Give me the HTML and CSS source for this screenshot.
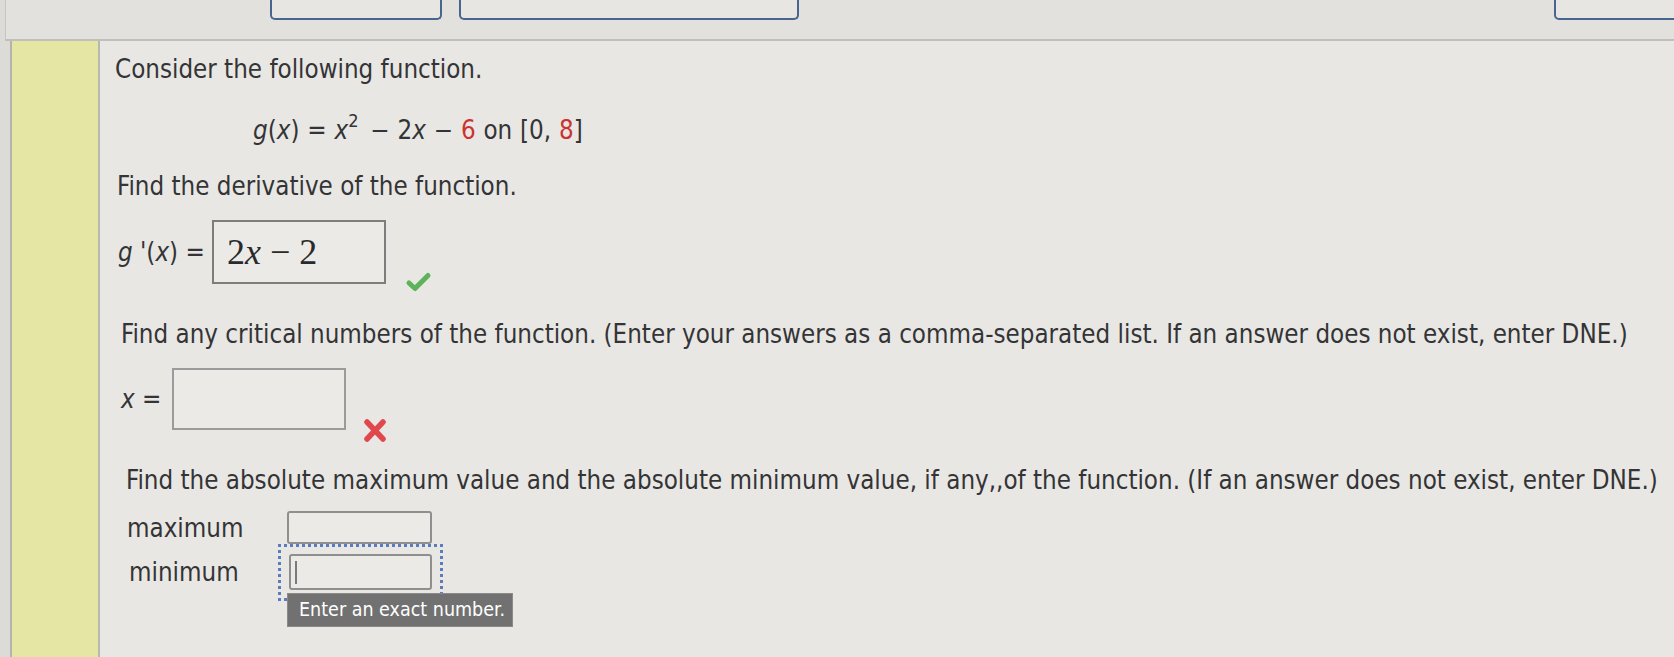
FILE: index.html
```html
<!DOCTYPE html>
<html>
<head>
<title>Question</title>
<link rel="stylesheet" href="styles.css">
</head>
<body>

<div id="topbar">
  <div class="tab tab1"></div>
  <div class="tab tab2"></div>
  <div class="tab tab3"></div>
</div>

<div id="main">
  <div id="marker"></div>

  <div id="question">
    <p class="line">Consider the following function.</p>
    <p class="line formula"><i>g</i>(<i>x</i>) = <i>x</i><sup>2</sup> &minus; 2<i>x</i> &minus; <span class="red">6</span> on [0, <span class="red">8</span>]</p>

    <p class="line deriv-text">Find the derivative of the function.</p>
    <div class="row deriv-row">
      <span class="label"><i>g</i> '(<i>x</i>) =</span>
      <div class="mathbox">2<i>x</i><span class="op">&minus;</span>2</div>
      <svg class="check" width="27" height="22" viewBox="0 0 27 22">
        <path d="M4 12 L10 17.5 L23 4.5" fill="none" stroke="#5cb35a" stroke-width="5" stroke-linecap="round" stroke-linejoin="round"/>
      </svg>
    </div>

    <p class="line crit-text">Find any critical numbers of the function. (Enter your answers as a comma-separated list. If an answer does not exist, enter DNE.)</p>
    <div class="row crit-row">
      <span class="label"><i>x</i> =</span>
      <div class="plainbox"></div>
      <svg class="cross" width="26" height="27" viewBox="0 0 26 27">
        <path d="M5 5 L21 22 M21 5 L5 22" fill="none" stroke="#e0484e" stroke-width="5.5" stroke-linecap="round"/>
      </svg>
    </div>

    <p class="line abs-text">Find the absolute maximum value and the absolute minimum value, if any,,of the function. (If an answer does not exist, enter DNE.)</p>
    <div class="row max-row">
      <span class="label">maximum</span>
      <div class="field max-field"></div>
    </div>
    <div class="row min-row">
      <span class="label">minimum</span>
      <div class="field min-field">
        <div class="focus-ring"></div>
        <div class="caret"></div>
        <div class="tooltip">Enter an exact number.</div>
      </div>
    </div>
  </div>
</div>

</body>
</html>
```

FILE: styles.css
```css
body {
  margin: 0;
  height: 657px;
  overflow: hidden;
  background-color: #dcdbd8;
  color: #343436;
  font-family: "DejaVu Sans Condensed", "DejaVu Sans", sans-serif;
  font-stretch: condensed;
  font-size: 25.7px;
}

#topbar {
  display: flex;
  align-items: flex-start;
  height: 39px;
  margin-left: 5px;
  background-color: #e2e1de;
  border-left: 1px solid #c6c5c2;
  border-bottom: 2px solid #c0bfbc;
}

.tab {
  flex: none;
  height: 18px;
  background-color: #e7e6e3;
  border: 2px solid #48658f;
  border-top: none;
  border-radius: 0 0 5px 5px;
}

.tab1 {
  margin-left: 264px;
  width: 168px;
}

.tab2 {
  margin-left: 17px;
  width: 336px;
}

.tab3 {
  margin-left: auto;
  margin-right: -14px;
  width: 130px;
}

#main {
  display: flex;
  height: 616px;
}

#marker {
  flex: none;
  width: 86px;
  margin-left: 10px;
  background-color: #e5e6a4;
  border-left: 2px solid #b4b4aa;
  border-right: 2px solid #b8b8b0;
}

#question {
  flex: 1;
  padding: 13px 0 0 15px;
  background-color: #e8e7e4;
}

.line {
  margin: 0;
  line-height: 30px;
  white-space: nowrap;
}

.formula {
  margin-top: 31px;
  padding-left: 138px;
  word-spacing: 0.5px;
}

.formula sup {
  font-size: 18px;
  vertical-align: 12px;
  line-height: 0;
  margin-right: 4px;
}

.red {
  color: #cc3330;
}

.deriv-text {
  margin-top: 26px;
  padding-left: 2px;
}

.row {
  display: flex;
  align-items: center;
}

.row .label {
  flex: none;
  white-space: nowrap;
}

.deriv-row {
  margin-top: 19px;
  padding-left: 3px;
}

.deriv-row .label {
  width: 94px;
}

.mathbox {
  box-sizing: border-box;
  display: flex;
  align-items: center;
  width: 174px;
  height: 64px;
  padding: 0 0 0 13px;
  border: 2px solid #7d7d7d;
  background-color: #ebeae7;
  color: #2a2a2c;
  font-family: "Liberation Serif", "DejaVu Serif", serif;
  font-size: 36px;
}

.mathbox .op {
  margin: 0 9px;
}

.check {
  align-self: flex-end;
  margin: 0 0 -9px 19px;
}

.crit-text {
  margin-top: 35px;
  padding-left: 6px;
}

.crit-row {
  margin-top: 19px;
  padding-left: 6px;
}

.crit-row .label {
  width: 51px;
}

.plainbox {
  box-sizing: border-box;
  width: 174px;
  height: 62px;
  border: 2px solid #9b9b9b;
  background-color: #ebeae7;
}

.cross {
  align-self: flex-end;
  margin: 0 0 -14px 16px;
}

.abs-text {
  margin-top: 35px;
  padding-left: 11px;
}

.max-row {
  margin-top: 16px;
  padding-left: 12px;
}

.min-row {
  margin-top: 10px;
  padding-left: 14px;
}

.max-row .label,
.min-row .label {
  width: 160px;
}

.field {
  box-sizing: border-box;
  position: relative;
  border: 2px solid #8f8f8f;
  border-radius: 3px;
  background-color: #ebeae7;
}

.max-field {
  width: 145px;
  height: 33px;
}

.min-field {
  width: 143px;
  height: 36px;
}

.focus-ring {
  position: absolute;
  left: -13px;
  top: -12px;
  right: -13px;
  bottom: -13px;
  border: 3px dotted #5b7cbd;
}

.caret {
  position: absolute;
  left: 4px;
  top: 5px;
  width: 2px;
  height: 23px;
  background-color: #7a7a7a;
}

.tooltip {
  position: absolute;
  left: -4px;
  top: 37px;
  box-sizing: border-box;
  width: 226px;
  height: 34px;
  padding-left: 11px;
  background-color: #717171;
  border: 1px solid #8a8a8a;
  color: #ffffff;
  font-size: 19.5px;
  line-height: 32px;
  white-space: nowrap;
}
```
